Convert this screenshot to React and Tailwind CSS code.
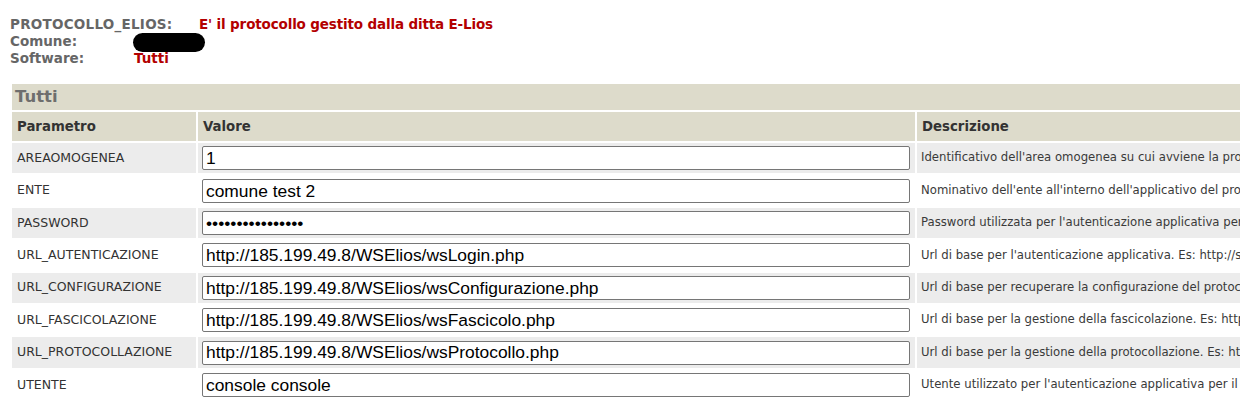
const rows = [
  { name: "AREAOMOGENEA", value: "1", desc: "Identificativo dell'area omogenea su cui avviene la protocollazione" },
  { name: "ENTE", value: "comune test 2", desc: "Nominativo dell'ente all'interno dell'applicativo del protocollo" },
  { name: "PASSWORD", value: "••••••••••••••••", desc: "Password utilizzata per l'autenticazione applicativa per il protocollo" },
  { name: "URL_AUTENTICAZIONE", value: "http://185.199.49.8/WSElios/wsLogin.php", desc: "Url di base per l'autenticazione applicativa. Es: http://server/wsLogin.php" },
  { name: "URL_CONFIGURAZIONE", value: "http://185.199.49.8/WSElios/wsConfigurazione.php", desc: "Url di base per recuperare la configurazione del protocollo" },
  { name: "URL_FASCICOLAZIONE", value: "http://185.199.49.8/WSElios/wsFascicolo.php", desc: "Url di base per la gestione della fascicolazione. Es: http://server/wsFascicolo.php" },
  { name: "URL_PROTOCOLLAZIONE", value: "http://185.199.49.8/WSElios/wsProtocollo.php", desc: "Url di base per la gestione della protocollazione. Es: http://server/wsProtocollo.php" },
  { name: "UTENTE", value: "console console", desc: "Utente utilizzato per l'autenticazione applicativa per il protocollo" },
];

const App = () => {
  return (
    <div className="w-[1240px] h-[416px] overflow-hidden bg-white font-['DejaVu_Sans',sans-serif]">
      <div className="pl-[10px] pt-[15px]">
        <div className="flex items-baseline h-[18px] text-[13.5px] font-bold leading-[18px]">
          <span className="w-[189px] text-[#666666] tracking-[0.25px]">PROTOCOLLO_ELIOS:</span>
          <span className="text-[#b30000] tracking-[-0.15px]">E' il protocollo gestito dalla ditta E-Lios</span>
        </div>
        <div className="flex items-center h-[17px] text-[13.5px] font-bold leading-[17px]">
          <span className="w-[123px] text-[#666666]">Comune:</span>
          <span className="inline-block w-[72px] h-[19px] mt-[2px] bg-black rounded-full" />
        </div>
        <div className="flex items-baseline h-[17px] text-[13.5px] font-bold leading-[17px]">
          <span className="w-[124px] text-[#666666]">Software:</span>
          <span className="text-[#b30000]">Tutti</span>
        </div>
      </div>

      <table className="ml-[10px] mt-[15px] w-[1500px] border-separate border-spacing-[2px] text-left">
        <thead>
          <tr>
            <th colSpan={3} className="h-[26px] bg-[#dddbcb] px-[3px] p-0 text-[16.5px] font-bold text-[#6e6e6e] leading-[26px]">
              Tutti
            </th>
          </tr>
          <tr className="h-[29px]">
            <th className="w-[184px] bg-[#dddbcb] px-[5px] py-0 text-[13.3px] font-bold text-[#333333]">Parametro</th>
            <th className="w-[717px] bg-[#dddbcb] px-[5px] py-0 text-[13.3px] font-bold text-[#333333]">Valore</th>
            <th className="bg-[#dddbcb] px-[5px] py-0 text-[13.3px] font-bold text-[#333333]">Descrizione</th>
          </tr>
        </thead>
        <tbody>
          {rows.map((r, i) => {
            const bg = i % 2 === 0 ? "bg-[#ececec]" : "bg-white";
            return (
              <tr key={r.name} className="h-[30.4px]">
                <td className={`${bg} px-[5px] py-0 text-[12.5px] text-[#333333] whitespace-nowrap`}>{r.name}</td>
                <td className={`${bg} px-[4px] py-0`}>
                  <input
                    type="text"
                    readOnly
                    value={r.value}
                    className="block w-[708px] h-[24px] border border-[#767676] rounded-[2px] bg-white px-[3px] font-['Liberation_Sans',Arial,sans-serif] text-[17.4px] text-black outline-none"
                  />
                </td>
                <td className={`${bg} px-[4px] py-0 text-[11.7px] text-[#3a3a3a] whitespace-nowrap`}>{r.desc}</td>
              </tr>
            );
          })}
        </tbody>
      </table>
    </div>
  );
};

export default App;
